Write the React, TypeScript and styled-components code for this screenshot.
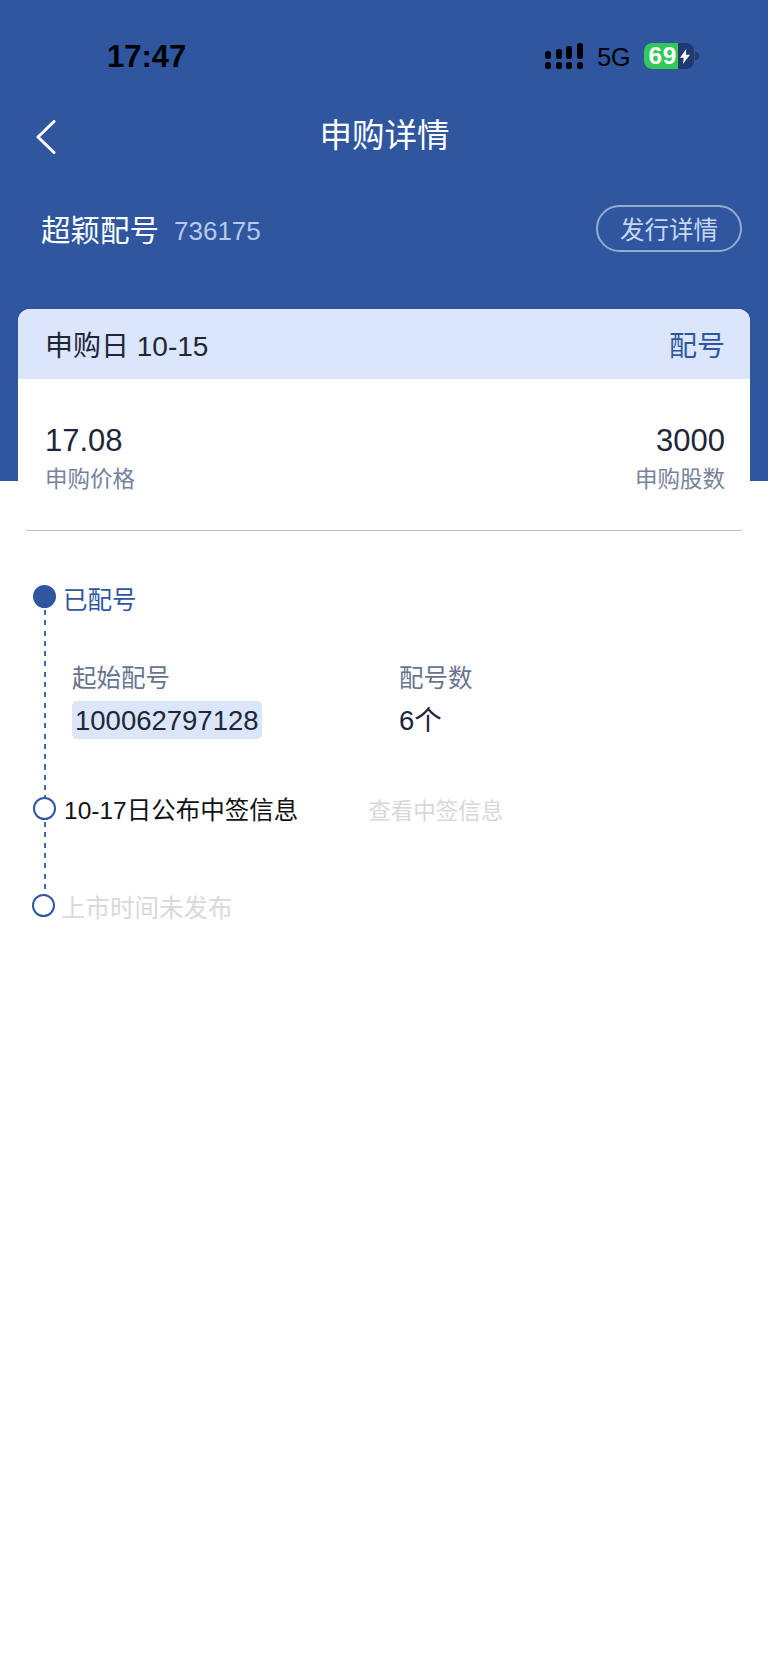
import React from "react";
import styled, { createGlobalStyle } from "styled-components";

const BLUE = "#2f569f";
const SANS = `"Liberation Sans", "Noto Sans CJK SC", sans-serif`;

const GlobalStyle = createGlobalStyle`
  html, body {
    margin: 0;
    padding: 0;
    background: #fff;
  }
  * {
    box-sizing: border-box;
  }
`;

const Page = styled.div`
  width: 768px;
  min-height: 1669px;
  background: #fff;
  font-family: ${SANS};
  overflow: hidden;
`;

const Header = styled.header`
  height: 481px;
  background: ${BLUE};
`;

const StatusBar = styled.div`
  height: 112px;
  padding: 0 69.5px 0 107px;
  display: flex;
  align-items: center;
  justify-content: space-between;
  color: #000;
`;

const Clock = styled.span`
  margin-top: 2px;
  font-size: 31px;
  font-weight: 700;
`;

const StatusRight = styled.div`
  display: flex;
  align-items: center;
`;

const NetworkLabel = styled.span`
  margin: 2px 13px 0 14px;
  font-size: 25px;
`;

const Battery = styled.div`
  width: 50px;
  height: 26px;
  border-radius: 8px;
  background: #22396f;
  display: flex;
  align-items: center;
`;

const BatteryLevel = styled.div`
  flex: none;
  width: 34px;
  height: 100%;
  border-radius: 8px 0 0 8px;
  background: #34c759;
  color: #fff;
  font-size: 24.5px;
  font-weight: 700;
  letter-spacing: 0.5px;
  line-height: 26px;
  padding-left: 5px;
`;

const BatteryNub = styled.div`
  width: 4px;
  height: 8px;
  margin-left: 1px;
  border-radius: 0 4px 4px 0;
  background: #22396f;
`;

const NavBar = styled.div`
  height: 48px;
  padding: 0 35px 0 36px;
  display: grid;
  grid-template-columns: 1fr auto 1fr;
  align-items: center;
`;

const BackSvg = styled.svg`
  margin-top: 2px;
`;

const Title = styled.h1`
  margin: 0 0 1px;
  color: #fff;
  font-size: 32.5px;
  font-weight: 400;
  line-height: 40px;
`;

const StockRow = styled.div`
  margin-top: 45px;
  height: 47px;
  padding: 0 26px 0 41px;
  display: flex;
  align-items: center;
`;

const StockName = styled.span`
  margin-bottom: 2px;
  color: #fff;
  font-size: 29.5px;
`;

const StockCode = styled.span`
  margin: 6px 0 0 15px;
  color: #b7c9ec;
  font-size: 26px;
`;

const DetailButton = styled.button`
  margin-left: auto;
  width: 146px;
  height: 47px;
  padding: 0;
  border: 2px solid rgba(255, 255, 255, 0.5);
  border-radius: 24px;
  background: transparent;
  color: #c8d6f0;
  font-family: inherit;
  font-size: 24.5px;
`;

const Card = styled.section`
  position: relative;
  margin: -172px 18px 0;
  border-radius: 12px 12px 0 0;
  background: #fff;
  overflow: hidden;
`;

const CardHead = styled.div`
  height: 70px;
  padding: 0 25px 0 27px;
  background: #dbe6fa;
  display: flex;
  align-items: center;
  justify-content: space-between;
  color: #20263a;
  font-size: 28px;
`;

const CardStatus = styled.span`
  color: ${BLUE};
`;

const CardBody = styled.div`
  padding: 41.5px 25px 35px 27px;
  display: flex;
  justify-content: space-between;
`;

const Metric = styled.div<{ $right?: boolean }>`
  display: flex;
  flex-direction: column;
  align-items: ${(p) => (p.$right ? "flex-end" : "flex-start")};
`;

const MetricValue = styled.span`
  color: #20263a;
  font-size: 31px;
  line-height: 40px;
`;

const MetricLabel = styled.span`
  margin-top: 4.5px;
  color: #76829c;
  font-size: 22.5px;
  line-height: 30px;
`;

const Divider = styled.hr`
  height: 1px;
  margin: 0 26px;
  border: 0;
  background: #b8c0d4;
`;

const Timeline = styled.div`
  padding: 54px 0 0 33px;
`;

const Step = styled.div<{ $height: number; $shift?: number }>`
  height: ${(p) => p.$height}px;
  margin-left: ${(p) => p.$shift ?? 0}px;
  display: flex;
  align-items: flex-start;
`;

const Node = styled.div<{ $filled?: boolean; $rail?: number }>`
  position: relative;
  flex: none;
  width: 23px;
  height: 23px;
  border-radius: 50%;
  border: 2px solid ${BLUE};
  background: ${(p) => (p.$filled ? BLUE : "#fff")};

  &::after {
    content: "";
    display: ${(p) => (p.$rail ? "block" : "none")};
    position: absolute;
    top: 23px;
    left: 8.5px;
    width: 2px;
    height: ${(p) => p.$rail}px;
    background: repeating-linear-gradient(
      to bottom,
      #4069b4 0 5px,
      transparent 5px 10.3px
    );
  }
`;

const StepLabel = styled.span<{ $tone: "active" | "normal" | "muted" }>`
  margin-left: ${(p) => (p.$tone === "normal" ? 8 : p.$tone === "active" ? 7 : 6)}px;
  margin-top: ${(p) => (p.$tone === "muted" ? 1 : p.$tone === "active" ? 2 : 0)}px;
  font-size: 24.5px;
  line-height: 28px;
  color: ${(p) =>
    p.$tone === "active" ? BLUE : p.$tone === "normal" ? "#111" : "#d9d9d9"};
`;

const StepLink = styled.span`
  margin-left: 70px;
  color: #d8d8d8;
  font-size: 22.5px;
  line-height: 30px;
`;

const StepDetail = styled.div`
  margin: -133px 0 0 39px;
  height: 133px;
  display: grid;
  grid-template-columns: 327px auto;
  justify-content: start;
`;

const DetailColumn = styled.div`
  display: flex;
  flex-direction: column;
  align-items: flex-start;
`;

const DetailLabel = styled.span`
  color: #69748f;
  font-size: 24.5px;
  line-height: 30px;
`;

const DetailValue = styled.span<{ $marked?: boolean }>`
  margin-top: 7px;
  height: 38px;
  padding: ${(p) => (p.$marked ? "0 3px" : "0")};
  border-radius: 5px;
  background: ${(p) => (p.$marked ? "#dbe6fa" : "transparent")};
  color: #20263a;
  font-size: 27.5px;
  line-height: 40px;
  white-space: nowrap;
`;

const BackIcon = () => (
  <BackSvg width="20" height="34" viewBox="0 0 20 34" fill="none">
    <path d="M18 1.5 2 17l16 15.5" stroke="#fff" strokeWidth="3" strokeLinecap="round" strokeLinejoin="round" />
  </BackSvg>
);

const SignalIcon = () => (
  <svg width="38" height="26" viewBox="0 0 38 26" fill="#000">
    <rect x="0" y="8" width="6" height="8" rx="2.5" />
    <rect x="11" y="6" width="6" height="10" rx="2.5" />
    <rect x="21" y="3" width="6" height="13" rx="2.5" />
    <rect x="32" y="0" width="6" height="16" rx="2.5" />
    <rect x="0" y="19" width="6" height="7" rx="2.5" />
    <rect x="11" y="19" width="6" height="7" rx="2.5" />
    <rect x="21" y="19" width="6" height="7" rx="2.5" />
    <rect x="32" y="19" width="6" height="7" rx="2.5" />
  </svg>
);

const BoltSvg = styled.svg`
  margin-left: 2px;
`;

const BoltIcon = () => (
  <BoltSvg width="10" height="17" viewBox="0 0 12 18" fill="#fff">
    <path d="M7.5 0 0 10.5h4.5L3.5 18 12 6.8H7z" />
  </BoltSvg>
);

export default function App() {
  return (
    <Page>
      <GlobalStyle />
      <Header>
        <StatusBar>
          <Clock>17:47</Clock>
          <StatusRight>
            <SignalIcon />
            <NetworkLabel>5G</NetworkLabel>
            <Battery>
              <BatteryLevel>69</BatteryLevel>
              <BoltIcon />
            </Battery>
            <BatteryNub />
          </StatusRight>
        </StatusBar>
        <NavBar>
          <BackIcon />
          <Title>申购详情</Title>
        </NavBar>
        <StockRow>
          <StockName>超颖配号</StockName>
          <StockCode>736175</StockCode>
          <DetailButton>发行详情</DetailButton>
        </StockRow>
      </Header>

      <Card>
        <CardHead>
          <span>申购日 10-15</span>
          <CardStatus>配号</CardStatus>
        </CardHead>
        <CardBody>
          <Metric>
            <MetricValue>17.08</MetricValue>
            <MetricLabel>申购价格</MetricLabel>
          </Metric>
          <Metric $right>
            <MetricValue>3000</MetricValue>
            <MetricLabel>申购股数</MetricLabel>
          </Metric>
        </CardBody>
      </Card>
      <Divider />

      <Timeline>
        <Step $height={212}>
          <Node $filled $rail={189} />
          <StepLabel $tone="active">已配号</StepLabel>
        </Step>
        <StepDetail>
          <DetailColumn>
            <DetailLabel>起始配号</DetailLabel>
            <DetailValue $marked>100062797128</DetailValue>
          </DetailColumn>
          <DetailColumn>
            <DetailLabel>配号数</DetailLabel>
            <DetailValue>6个</DetailValue>
          </DetailColumn>
        </StepDetail>
        <Step $height={97}>
          <Node $rail={74} />
          <StepLabel $tone="normal">10-17日公布中签信息</StepLabel>
          <StepLink>查看中签信息</StepLink>
        </Step>
        <Step $height={40} $shift={-1}>
          <Node />
          <StepLabel $tone="muted">上市时间未发布</StepLabel>
        </Step>
      </Timeline>
    </Page>
  );
}
